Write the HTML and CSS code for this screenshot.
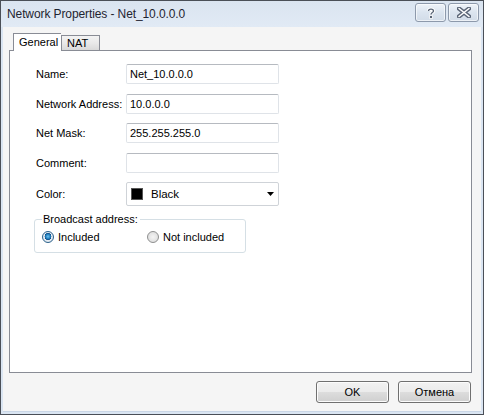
FILE: index.html
```html
<!DOCTYPE html>
<html>
<head>
<meta charset="utf-8">
<link rel="stylesheet" href="styles.css">
</head>
<body>
<div class="window">
  <div class="titlebar">
    <span class="title">Network Properties - Net_10.0.0.0</span>
    <div class="tbtns">
      <div class="tbtn">
        <svg width="12" height="12" viewBox="0 0 12 12"><path d="M3.5 4 C3.5 1.5 8.5 1.5 8.5 4 C8.5 5.5 6 5.5 6 7.5" fill="none" stroke="#fff" stroke-width="3.4"/><path d="M3.5 4 C3.5 1.5 8.5 1.5 8.5 4 C8.5 5.5 6 5.5 6 7.5" fill="none" stroke="#5a6577" stroke-width="1.4"/><rect x="4.6" y="8.6" width="2.8" height="2.8" fill="#5a6577" stroke="#fff" stroke-width="0.8"/></svg>
      </div>
      <div class="tbtn">
        <svg width="14" height="11" viewBox="0 0 14 11"><path d="M2 1.5 L12 9.5 M12 1.5 L2 9.5" stroke="#5a6577" stroke-width="4.2" stroke-linecap="round"/><path d="M2 1.5 L12 9.5 M12 1.5 L2 9.5" stroke="#fff" stroke-width="1.6" stroke-linecap="round"/></svg>
      </div>
    </div>
  </div>
  <div class="client">
    <div class="tabs">
      <div class="tab active">General</div>
      <div class="tab nat">NAT</div>
    </div>
    <div class="panel">
      <div class="row"><label class="lbl">Name:</label><div class="input">Net_10.0.0.0</div></div>
      <div class="row"><label class="lbl">Network Address:</label><div class="input">10.0.0.0</div></div>
      <div class="row"><label class="lbl">Net Mask:</label><div class="input">255.255.255.0</div></div>
      <div class="row"><label class="lbl">Comment:</label><div class="input"></div></div>
      <div class="row crow"><label class="lbl">Color:</label>
        <div class="combo"><span class="swatch"></span><span class="ctext">Black</span>
          <svg class="arrow" width="7" height="4" viewBox="0 0 7 4"><path d="M0 0 H7 L3.5 4 Z" fill="#000"/></svg>
        </div>
      </div>
      <fieldset class="group">
        <legend>Broadcast address:</legend>
        <div class="radios">
          <div class="radio first"><span class="rb on"></span>Included</div>
          <div class="radio"><span class="rb"></span>Not included</div>
        </div>
      </fieldset>
    </div>
    <div class="buttons">
      <div class="btn">OK</div>
      <div class="btn">Отмена</div>
    </div>
  </div>
</div>
</body>
</html>
```
FILE: styles.css
```css
html, body { margin: 0; padding: 0; }
body {
  width: 484px; height: 415px; overflow: hidden;
  font-family: "Liberation Sans", Arial, sans-serif;
  font-size: 11px; color: #000; background: #fff;
}
.window {
  box-sizing: border-box; width: 484px; height: 415px;
  border: 1px solid #4a4f57;
  background: #dae5f2;
  display: flex; flex-direction: column;
}
.titlebar {
  height: 26px; flex: none;
  display: flex; align-items: flex-start; justify-content: space-between;
  background: linear-gradient(#dae4f0, #e1eaf5);
}
.title { font-size: 12px; color: #1e2430; margin: 6px 0 0 6px; letter-spacing: -0.1px; }
.tbtns { display: flex; gap: 2px; margin: 2px 4px 0 0; }
.tbtn {
  box-sizing: border-box; width: 31px; height: 19px;
  border: 1px solid #8d99ab; border-radius: 3px;
  background: linear-gradient(#eef3f9, #dbe4ef 50%, #d2dce8);
  display: flex; align-items: center; justify-content: center;
  box-shadow: inset 0 0 0 1px rgba(255,255,255,0.6);
}
.client {
  flex: 1; margin: 0 2px 2px 2px;
  background: #f5f5f5;
  display: flex; flex-direction: column;
  border-bottom: 1px solid #c9d6e6;
}
.tabs { display: flex; align-items: flex-end; margin: 6px 0 0 10px; height: 17px; position: relative; z-index: 1; }
.tab {
  box-sizing: border-box; height: 15px; padding: 0 0 0 5px;
  border: 1px solid #898c95; border-bottom: none;
  background: linear-gradient(#f3f3f3, #e9e9e9 50%, #d9d9d9);
  line-height: 14px;
}
.tab.nat { width: 39px; }
.tab.active {
  width: 48px; height: 18px; background: #fff; padding: 0 0 0 5px;
  margin-bottom: -1px; border-right: none; line-height: 17px;
}
.panel {
  box-sizing: border-box; width: 463px; height: 323px;
  margin-left: 6px;
  border: 1px solid #898c95; background: #fff;
  padding: 13px 0 0 26px;
}
.row { display: flex; align-items: center; height: 20px; margin-bottom: 9.5px; }
.lbl { width: 90px; flex: none; }
.input {
  box-sizing: border-box; width: 153px; height: 20px;
  border: 1px solid #dfe3e8; border-top-color: #b6bac0; border-radius: 2px;
  padding: 0 3px; line-height: 18px; font-size: 11px;
}
.crow { height: 24px; margin-top: 0; margin-bottom: 8px; }
.combo {
  box-sizing: border-box; width: 153px; height: 24px;
  border: 1px solid #cfd3d8; border-radius: 2px;
  display: flex; align-items: center; padding-left: 4px;
  background: #fff;
}
.swatch { width: 12px; height: 12px; background: #000; box-sizing: border-box; border: 1px solid #555; flex: none; }
.ctext { margin-left: 8px; flex: 1; font-size: 11.5px; }
.arrow { margin-right: 4px; }
.group {
  box-sizing: border-box; width: 212px; min-width: 0; height: 40px;
  margin: -1px 0 0 -2px; padding: 0 0 0 7px;
  border: 1px solid #d5dfe5; border-radius: 3px;
}
.group legend { padding: 0 2px 0 1px; margin-left: 0; line-height: 12px; }
.radios { display: flex; margin-top: 6px; }
.radio { display: flex; align-items: center; }
.radio.first { width: 105px; }
.rb {
  box-sizing: border-box; width: 12px; height: 12px; border-radius: 50%;
  border: 1px solid #8e8f8f;
  background: radial-gradient(circle, #f4f4f4, #d8d8d8);
  margin-right: 4px; flex: none;
}
.rb.on {
  border-color: #2c628b;
  background: radial-gradient(circle at 50% 45%, #6dc3f3 0, #1b77b5 2.5px, #0c4a86 3.3px, #e8eef4 3.6px, #dfe7ef 5px);
}
.buttons { display: flex; justify-content: flex-end; gap: 9px; margin: 8px 10px 0 0; }
.btn {
  box-sizing: border-box; width: 73px; height: 22px;
  border: 1px solid #707070; border-radius: 3px;
  background: linear-gradient(#f2f2f2, #ebebeb 50%, #dddddd 51%, #cfcfcf);
  box-shadow: inset 0 0 0 1px #fcfcfc;
  text-align: center; line-height: 20px; font-size: 11px;
}
```
